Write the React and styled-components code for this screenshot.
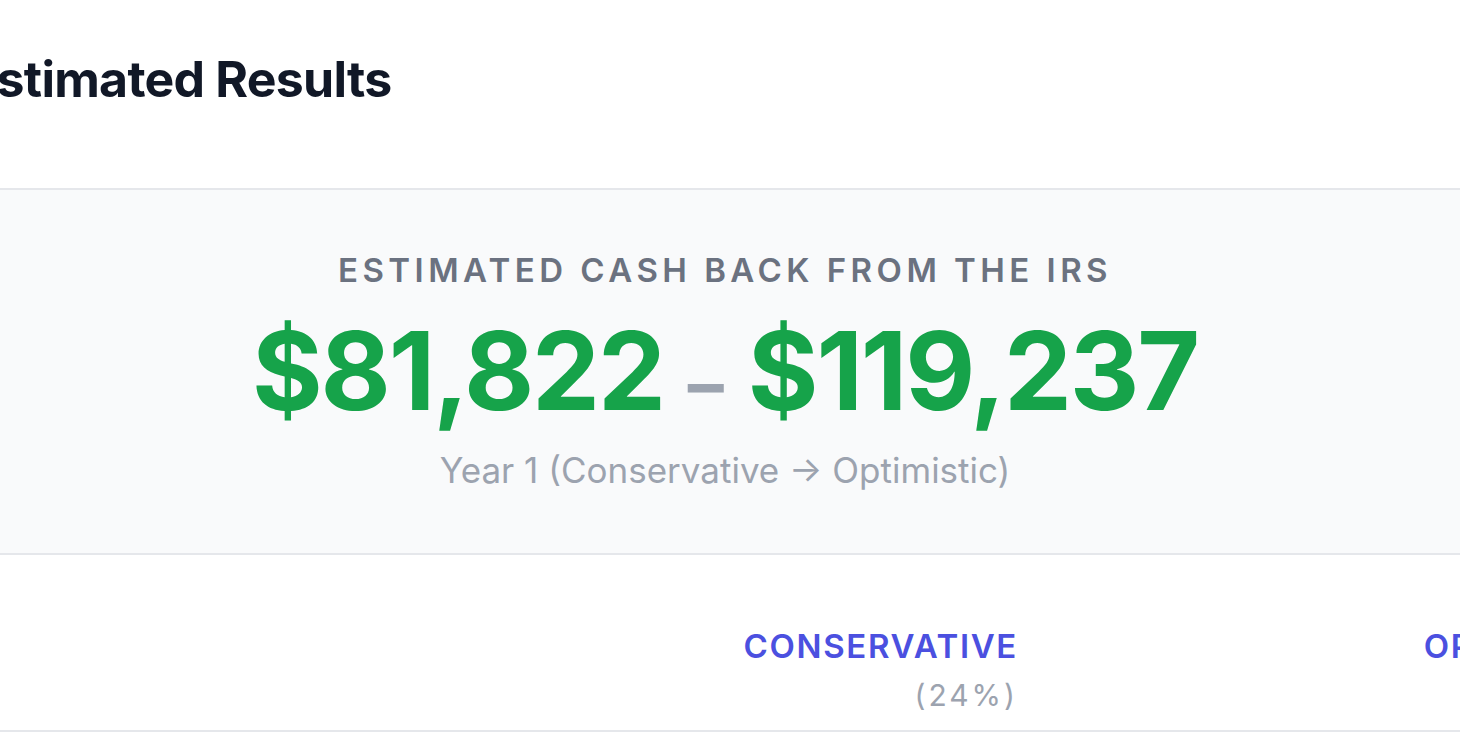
import React from 'react'
import styled, { createGlobalStyle } from 'styled-components'

const GlobalStyle = createGlobalStyle`
  html, body {
    margin: 0;
    background: #ffffff;
    overflow: hidden;
  }
  body {
    font-family: Inter, "Noto Sans", sans-serif;
    -webkit-font-smoothing: antialiased;
  }
`

// the frame shows a crop of a wider page, so the page starts a little left of it
const Page = styled.main`
  width: 1516px;
  margin-left: -33px;
  padding-top: 54px;
`

const Title = styled.h2`
  margin: 0;
  font-size: 50px;
  line-height: 1;
  font-weight: 700;
  color: #111827;
  letter-spacing: -0.015em;
`

const Hero = styled.section`
  margin-top: 84px;
  padding: 64px 0 65px;
  background: #f9fafb;
  border-top: 2px solid #e5e7eb;
  border-bottom: 2px solid #e5e7eb;
  display: flex;
  flex-direction: column;
  align-items: center;
`

const Eyebrow = styled.div`
  font-size: 33px;
  line-height: 1;
  font-weight: 600;
  letter-spacing: 0.135em;
  text-transform: uppercase;
  color: #6b7280;
`

const Range = styled.div`
  margin-top: 30px;
  display: flex;
  align-items: baseline;
  gap: 24px;
`

const Amount = styled.span`
  font-size: 108px;
  line-height: 1;
  font-weight: 700;
  letter-spacing: -0.02em;
  color: #16a34a;
`

const Dash = styled.span`
  font-size: 72px;
  line-height: 1;
  font-weight: 700;
  color: #9ca3af;
`

const Caption = styled.div`
  margin-top: 28px;
  font-size: 35px;
  line-height: 1;
  color: #9ca3af;
`

const HeadRow = styled.div`
  display: grid;
  grid-template-columns: 425px 640px 616px;
  height: 175px;
  border-bottom: 2px solid #e5e7eb;
`

const HeadCell = styled.div`
  display: flex;
  flex-direction: column;
  justify-content: flex-end;
  align-items: ${p => (p.$align === 'left' ? 'flex-start' : 'flex-end')};
  padding: 0 14px 20px;
`

const Scenario = styled.span`
  font-size: 33px;
  line-height: 1;
  font-weight: 600;
  letter-spacing: 0.05em;
  text-transform: uppercase;
  color: #4b50e0;
`

const Rate = styled.span`
  margin-top: 17px;
  font-size: 30px;
  line-height: 1;
  letter-spacing: 0.1em;
  color: #9ca3af;
`

const scenarios = [
  { name: 'Conservative', rate: '24%' },
  { name: 'Optimistic', rate: '35%' },
]

export default function App() {
  return (
    <>
      <GlobalStyle />
      <Page>
        <Title>Estimated Results</Title>
        <Hero>
          <Eyebrow>Estimated cash back from the IRS</Eyebrow>
          <Range>
            <Amount>$81,822</Amount>
            <Dash>–</Dash>
            <Amount>$119,237</Amount>
          </Range>
          <Caption>Year 1 (Conservative → Optimistic)</Caption>
        </Hero>
        <HeadRow>
          <HeadCell $align="left" />
          {scenarios.map(s => (
            <HeadCell key={s.name}>
              <Scenario>{s.name}</Scenario>
              <Rate>({s.rate})</Rate>
            </HeadCell>
          ))}
        </HeadRow>
      </Page>
    </>
  )
}
